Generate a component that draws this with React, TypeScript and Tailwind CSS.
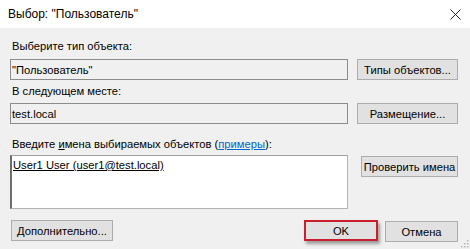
import React from "react";

const font = { fontFamily: '"Liberation Sans", Arial, sans-serif' };

function Btn({ children, w, className = "" }: { children: React.ReactNode; w: string; className?: string }) {
  return (
    <div
      className={`h-[21px] ${w} border border-[#adadad] bg-[#e1e1e1] flex items-center justify-center whitespace-nowrap text-[11.2px] leading-[16px] text-black ${className}`}
    >
      {children}
    </div>
  );
}

export default function App() {
  return (
    <div className="w-[470px] h-[249px] bg-[#f0f0f0] relative overflow-hidden text-black" style={font}>
      {/* Title bar */}
      <div className="h-[28px] bg-white flex items-center justify-between pl-[8px] pr-[9px]">
        <span className="text-[12px] leading-[16px]">Выбор: "Пользователь"</span>
        <svg width="11" height="11" viewBox="0 0 11 11" className="mt-[1px]">
          <path d="M0.5 0.5 L10.5 10.5 M10.5 0.5 L0.5 10.5" stroke="#222" strokeWidth="1" fill="none" />
        </svg>
      </div>

      <div className="pl-[10px] pr-[12px] flex flex-col text-[11.2px] leading-[16px]">
        <div className="mt-[10px] pl-[2px]">Выберите тип объекта:</div>
        <div className="mt-[5px] flex items-center">
          <div className="w-[338px] h-[21px] border border-[#8c8c8c] bg-[#f0f0f0] flex items-center pl-[1px]">
            "Пользователь"
          </div>
          <Btn w="w-[101px]" className="ml-auto">Типы объектов...</Btn>
        </div>

        <div className="mt-[3px] pl-[2px]">В следующем месте:</div>
        <div className="mt-[4px] flex items-center">
          <div className="w-[338px] h-[21px] border border-[#8c8c8c] bg-[#f0f0f0] flex items-center pl-[1px]">
            test.local
          </div>
          <Btn w="w-[101px]" className="ml-auto">Размещение...</Btn>
        </div>

        <div className="mt-[12px] pl-[2px] whitespace-nowrap">
          Введите <span className="underline">и</span>мена выбираемых объектов (<span className="text-[#0066cc] underline">примеры</span>):
        </div>
        <div className="mt-[3px] flex items-start">
          <div className="w-[338px] h-[54px] border border-[#b4b4b4] border-l-2 border-l-[#6e6e6e] border-t-[#a0a0a0] bg-white pl-[1px] pt-[1px]">
            <span className="underline">User1 User (user1@test.local)</span>
          </div>
          <Btn w="w-[97px]" className="ml-auto mt-[1px]">Проверить имена</Btn>
        </div>

        <div className="mt-[10px] flex items-center">
          <Btn w="w-[102px]" className="ml-[1px]">Дополнительно...</Btn>
          <div className="ml-auto mr-[7px] w-[74px] h-[21px] border-2 border-[#c8202f] shadow-[2px_3px_3px_rgba(0,0,0,0.35)] bg-[#e1e1e1] flex items-center justify-center">
            OK
          </div>
          <Btn w="w-[73px]" className="mt-[2px]">Отмена</Btn>
        </div>
      </div>

      {/* resize grip */}
      <svg width="10" height="10" viewBox="0 0 10 10" className="absolute right-[1px] bottom-[1px]">
        <rect x="8" y="2" width="1.5" height="1.5" fill="#b8b8b8" />
        <rect x="5" y="5" width="1.5" height="1.5" fill="#b8b8b8" />
        <rect x="8" y="5" width="1.5" height="1.5" fill="#b8b8b8" />
        <rect x="2" y="8" width="1.5" height="1.5" fill="#b8b8b8" />
        <rect x="5" y="8" width="1.5" height="1.5" fill="#b8b8b8" />
        <rect x="8" y="8" width="1.5" height="1.5" fill="#b8b8b8" />
      </svg>
    </div>
  );
}
